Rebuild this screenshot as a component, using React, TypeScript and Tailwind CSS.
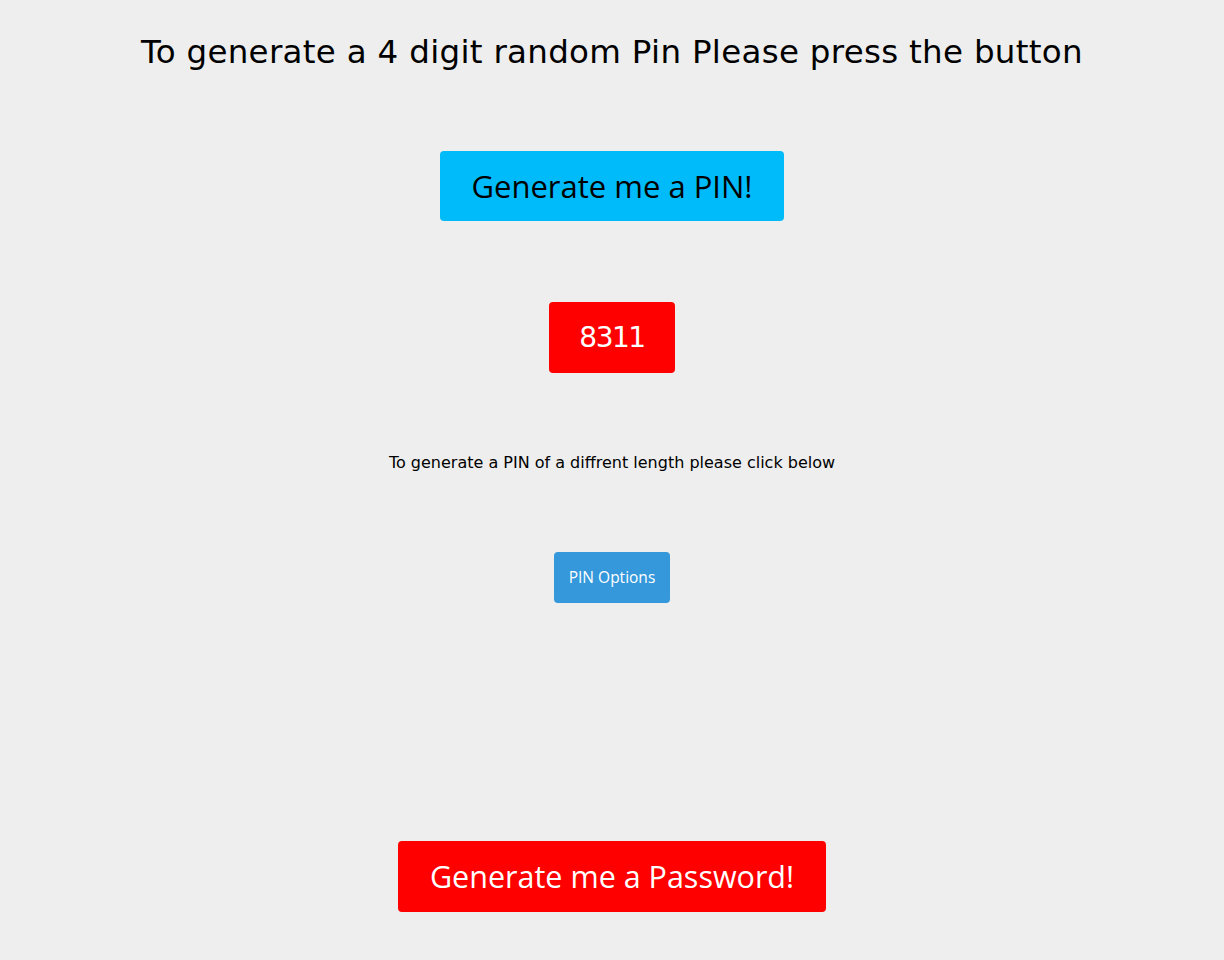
export default function App() {
  const pin = '8311'

  return (
    <div className="min-h-screen w-full bg-[#eeeeee] flex flex-col items-center pt-[32px] font-['Liberation_Sans',sans-serif]">
      {/* Heading */}
      <h1 className="h-10 leading-10 text-[32.5px] text-black font-['DejaVu_Sans',sans-serif] tracking-[0.3px]">
        To generate a 4 digit random Pin Please press the button
      </h1>

      <button className="mt-[79px] w-[344px] h-[70px] rounded-[4px] bg-[#00bbf9] text-black text-[31px] font-['Open_Sans',sans-serif]">
        Generate me a PIN!
      </button>

      {/* PIN display */}
      <div className="mt-[81px] w-[126px] h-[71px] rounded-[4px] bg-[#ff0000] text-white text-[28px] flex items-center justify-center font-['DejaVu_Sans',sans-serif] tracking-[-1.5px]">
        {pin}
      </div>

      <p className="mt-[78px] h-6 leading-6 text-[16px] text-black font-['DejaVu_Sans',sans-serif]">
        To generate a PIN of a diffrent length please click below
      </p>

      <button className="mt-[77px] w-[116px] h-[51px] rounded-[4px] bg-[#3498db] text-white text-[15.5px] font-['Open_Sans',sans-serif]">
        PIN Options
      </button>

      <button className="mt-[238px] w-[428px] h-[71px] rounded-[4px] bg-[#ff0000] text-white text-[30.5px] font-['Open_Sans',sans-serif]">
        Generate me a Password!
      </button>
    </div>
  )
}
